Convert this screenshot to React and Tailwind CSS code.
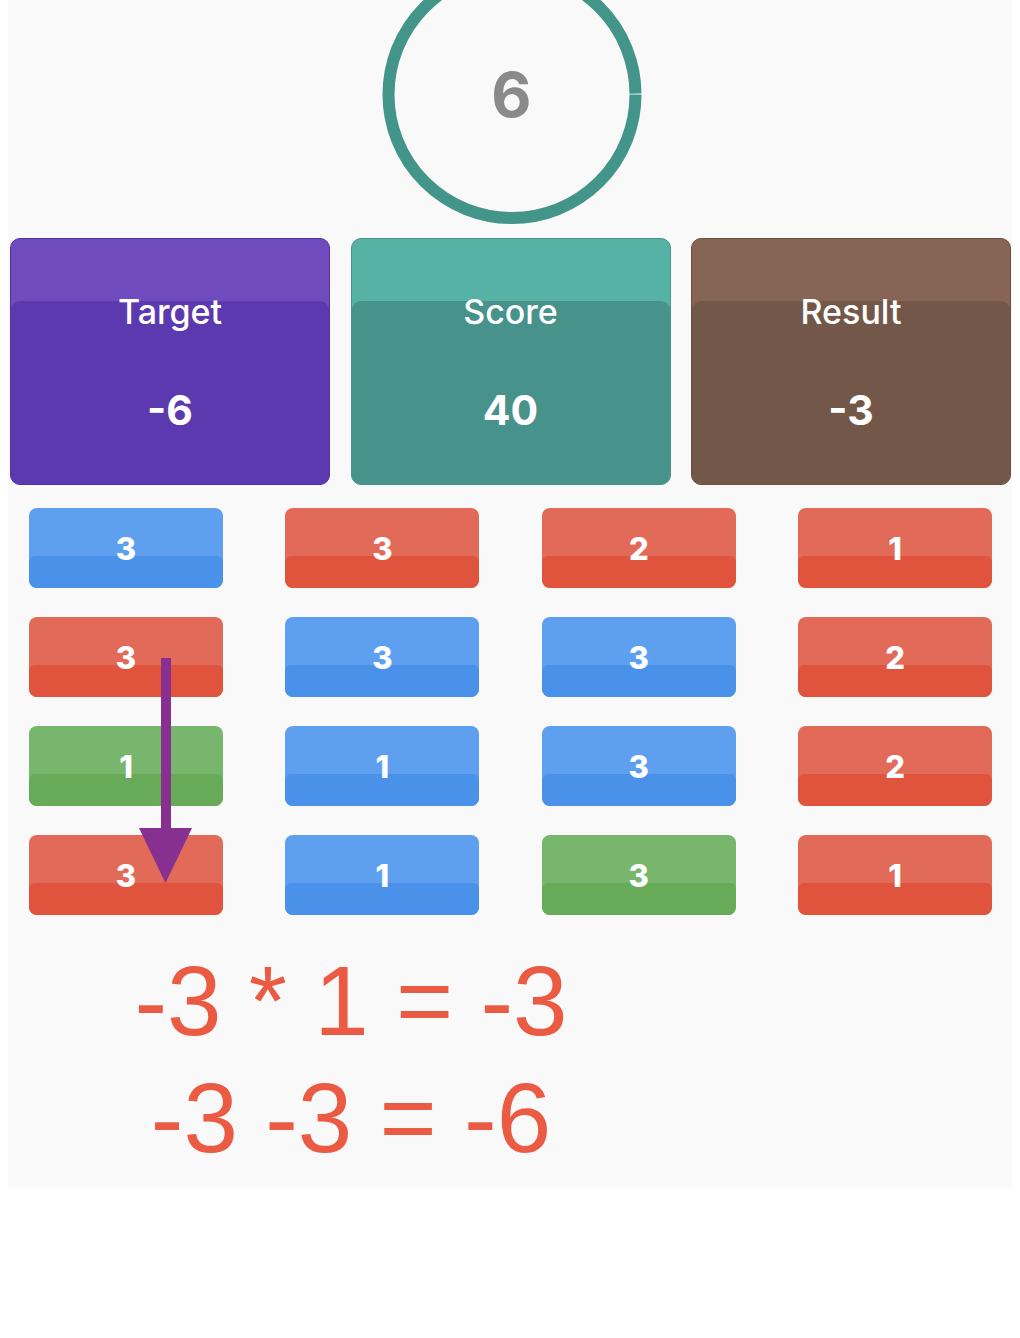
import React from 'react';

const cards = [
  { label: 'Target', value: '-6', top: 'bg-[#6f4bbe]', bottom: 'bg-[#5d39af]', border: 'border-[#5230a8]' },
  { label: 'Score', value: '40', top: 'bg-[#56b2a4]', bottom: 'bg-[#47928a]', border: 'border-[#47928a]' },
  { label: 'Result', value: '-3', top: 'bg-[#876556]', bottom: 'bg-[#73584a]', border: 'border-[#6e4f3c]' },
];

const tileColors = {
  blue: { top: 'bg-[#5e9fef]', bottom: 'bg-[#4a91e9]' },
  red: { top: 'bg-[#e26a58]', bottom: 'bg-[#e0543e]' },
  green: { top: 'bg-[#77b66c]', bottom: 'bg-[#67ab59]' },
};

// row by row, left to right
const tiles = [
  ['blue', 3], ['red', 3], ['red', 2], ['red', 1],
  ['red', 3], ['blue', 3], ['blue', 3], ['red', 2],
  ['green', 1], ['blue', 1], ['blue', 3], ['red', 2],
  ['red', 3], ['blue', 1], ['green', 3], ['red', 1],
];

const Timer = ({ seconds }) => {
  const r = 123.5;
  const c = 2 * Math.PI * r;
  return (
    <div className="flex justify-center h-[238px]">
      <div className="relative w-[260px] h-[224px] ml-[3px]">
        <svg width="260" height="224" viewBox="-130 -94.5 260 224">
          <circle cx="0" cy="0" r={r} fill="none" stroke="#43958a" strokeWidth="12" strokeDasharray={`${c - 1.2} 1.2`} />
        </svg>
        <div className="absolute left-0 right-0 top-[60px] text-center text-[62px] leading-[70px] font-bold text-[#8a8a8a] font-['Inter',sans-serif]">
          {seconds}
        </div>
      </div>
    </div>
  );
};

const StatCard = ({ label, value, top, bottom, border }) => (
  <div className={`relative h-[247px] rounded-[10px] border ${border} ${top} overflow-hidden`}>
    <div className={`absolute inset-x-0 top-[62px] bottom-0 rounded-t-[9px] ${bottom}`} />
    <div className="relative flex flex-col items-center pt-[56px] text-white font-['Inter',sans-serif]">
      <span className="text-[34px] leading-[34px] font-medium">{label}</span>
      <span className="mt-[61px] text-[41px] leading-[40px] font-bold">{value}</span>
    </div>
  </div>
);

const Tile = ({ color, n }) => {
  const c = tileColors[color];
  return (
    <div className={`relative w-[194px] h-[80px] rounded-[8px] ${c.top} overflow-hidden`}>
      <div className={`absolute inset-x-0 top-[48px] bottom-0 rounded-t-[6px] ${c.bottom}`} />
      <div className="relative flex h-full items-center justify-center pt-[2px] text-white text-[31px] font-extrabold font-['Inter',sans-serif]">
        {n}
      </div>
    </div>
  );
};

export default function App() {
  return (
    <div className="min-h-[1338px] bg-white">
      <div className="mx-2 bg-[#f9f9f9] pb-[11px]">
        <Timer seconds={6} />

        <div className="grid grid-cols-[repeat(3,320px)] gap-x-[20.5px] pl-[2px]">
          {cards.map((card) => (
            <StatCard key={card.label} {...card} />
          ))}
        </div>

        <div className="relative mt-[23px] pl-[21px] grid grid-cols-[repeat(4,194px)] gap-x-[62.4px] gap-y-[29px]">
          {tiles.map(([color, n], i) => (
            <Tile key={i} color={color} n={n} />
          ))}
          {/* drag arrow drawn over the first column */}
          <svg className="absolute left-[131px] top-[150px]" width="56" height="226" viewBox="0 0 56 226">
            <rect x="22" y="0" width="10" height="172" fill="#87308f" />
            <polygon points="0,170 53,170 26.5,225" fill="#87308f" />
          </svg>
        </div>

        <div className="mt-[28px] w-[686px] text-center text-[98px] leading-[117px] text-[#eb5a42] font-['Liberation_Sans',Arial,sans-serif]">
          <div>-3 * 1 = -3</div>
          <div>-3 -3 = -6</div>
        </div>
      </div>
    </div>
  );
}
